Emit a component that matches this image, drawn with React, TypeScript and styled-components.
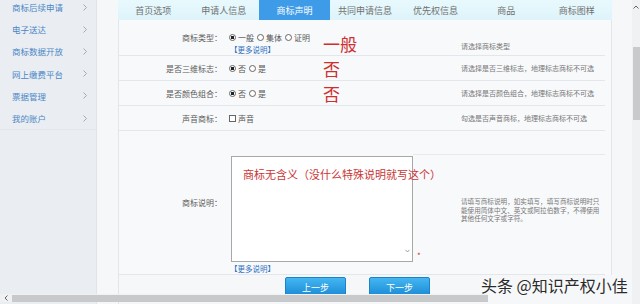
import React from "react";
import styled, { createGlobalStyle } from "styled-components";

const Global = createGlobalStyle`
  html, body { margin: 0; padding: 0; }
  body {
    width: 640px; height: 304px; overflow: hidden; background: #f5f7f9;
    font-family: "Noto Sans CJK SC", "Noto Sans", sans-serif;
  }
`;

const Page = styled.div`
  position: relative;
  width: 640px;
  height: 304px;
  display: flex;
  overflow: hidden;
  background: #f5f7f9;
`;

const Sidebar = styled.nav`
  width: 97px;
  flex: none;
  background: #eaeef3;
  border-right: 1px solid #dfe4ea;
  box-sizing: border-box;
`;

const MenuList = styled.ul`
  list-style: none;
  margin: -4px 0 0;
  padding: 0;
  border-bottom: 1px solid #e1e6ec;
`;

const MenuItem = styled.li`
  height: 22.2px;
  display: flex;
  align-items: center;
  justify-content: space-between;
  padding: 0 9px 0 12px;
  font-size: 8.5px;
  color: #4a86c6;
`;

const Chevron = () => (
  <svg width="4" height="7" viewBox="0 0 4 7">
    <path d="M0.5 0.5 L3.5 3.5 L0.5 6.5" fill="none" stroke="#9aa3ad" strokeWidth="0.9" />
  </svg>
);

const Main = styled.div`
  margin-left: 21px;
  width: 494px;
  flex: none;
  display: flex;
  flex-direction: column;
`;

const Tabs = styled.div`
  height: 20px;
  display: grid;
  grid-template-columns: repeat(7, 1fr);
  background: linear-gradient(#e8f9fd, #def4fa);
`;

const Tab = styled.div<{ $active?: boolean }>`
  display: flex;
  align-items: center;
  justify-content: center;
  font-size: 9px;
  color: ${(p) => (p.$active ? "#ffffff" : "#707070")};
  background: ${(p) => (p.$active ? "#3d9be8" : "transparent")};
`;

const Panel = styled.div`
  flex: 1;
  background: #f8f9fb;
  border-left: 1px solid #e2e6eb;
  border-right: 1px solid #e2e6eb;
  padding-right: 6px;
  box-sizing: border-box;
`;

const Row = styled.div<{ $h: number }>`
  height: ${(p) => p.$h}px;
  display: grid;
  grid-template-columns: 109px 233px 1fr;
  border-bottom: 1px solid #e3e6ea;
  box-sizing: border-box;
`;

const Label = styled.div`
  display: flex;
  align-items: center;
  justify-content: flex-end;
  padding-right: 6px;
  font-size: 8px;
  color: #5a5a5a;
  white-space: nowrap;
`;

const Control = styled.div<{ $top?: number }>`
  display: grid;
  grid-template-columns: 95px auto;
  align-items: center;
  align-content: ${(p) => (p.$top !== undefined ? "start" : "center")};
  padding-top: ${(p) => p.$top ?? 0}px;
`;

const Stack = styled.div`
  display: flex;
  flex-direction: column;
`;

const Line = styled.div`
  height: 12px;
  display: flex;
  align-items: center;
  font-size: 8px;
  color: #555;
  white-space: nowrap;
`;

const More = styled.span`
  font-size: 7.5px;
  color: #2e6fc0;
  margin-left: 2px;
`;

const Radio = styled.span<{ $on?: boolean }>`
  width: 5px;
  height: 5px;
  border: 0.8px solid #666;
  border-radius: 50%;
  margin: 0 2px 0 1px;
  background: ${(p) => (p.$on ? "radial-gradient(circle, #222 45%, #fff 55%)" : "#fff")};
  flex: none;
`;

const Box = styled.span`
  width: 5px;
  height: 5px;
  border: 0.8px solid #666;
  margin: 0 2px 0 1px;
  background: #fff;
  flex: none;
`;

const Opt = styled.span`
  margin-right: 2px;
`;

const Note = styled.span`
  font-size: 17px;
  line-height: 17px;
  color: #cf2f2f;
  white-space: nowrap;
`;

const Hint = styled.div<{ $align?: string; $pad?: number }>`
  position: relative;
  display: flex;
  flex-direction: column;
  justify-content: ${(p) => p.$align ?? "center"};
  padding-top: ${(p) => p.$pad ?? 0}px;
  padding-bottom: ${(p) => (p.$align === "flex-end" ? 4 : 0)}px;
  font-size: 7px;
  color: #777;
  white-space: nowrap;
  box-sizing: border-box;
`;

const HintLineText = styled.div`
  font-size: 6.6px;
  height: 8.6px;
  line-height: 8.6px;
  white-space: nowrap;
`;

const HintRule = styled.div`
  position: absolute;
  left: -48px;
  right: 0;
  top: 23px;
  border-top: 1px solid #e6e9ed;
`;

const AreaWrap = styled.div`
  position: relative;
  margin-left: 3px;
  width: 182px;
`;

const Area = styled.div`
  width: 182px;
  height: 106px;
  box-sizing: border-box;
  border: 1px solid #a8a8a8;
  background: #fff;
`;

const AreaText = styled.div`
  position: absolute;
  left: 12px;
  top: 11px;
  font-size: 11px;
  line-height: 14px;
  color: #c93535;
  white-space: nowrap;
`;

const AreaArrow = styled.div`
  position: absolute;
  right: 3px;
  bottom: 9px;
  display: flex;
`;

const Star = styled.span`
  position: absolute;
  left: 186px;
  top: 94px;
  font-size: 8px;
  color: #d03030;
`;

const Buttons = styled.div`
  height: 29px;
  display: flex;
  gap: 23px;
  padding: 2px 0 0 166px;
  box-sizing: border-box;
  border-left: 1px solid #e2e6eb;
`;

const Btn = styled.div`
  width: 61px;
  height: 20px;
  box-sizing: border-box;
  border: 1px solid #1b82cc;
  border-radius: 2px;
  background: linear-gradient(#44b6f0, #1a8ad6);
  color: #fff;
  font-size: 9px;
  display: flex;
  align-items: center;
  justify-content: center;
`;

const Gutter = styled.div`
  flex: 1;
`;

const VScroll = styled.div`
  width: 8px;
  flex: none;
  background: #f0f1f2;
  display: flex;
  flex-direction: column;
  align-items: center;
`;

const VArrow = styled.div`
  height: 14px;
  display: flex;
  align-items: center;
`;

const VThumb = styled.div`
  margin-top: 33px;
  width: 7px;
  height: 73px;
  background: #c9cacb;
`;

const HScroll = styled.div`
  position: absolute;
  left: 0;
  bottom: 2px;
  width: 488px;
  height: 8px;
  display: flex;
  align-items: center;
  background: #f0f1f2;
`;

const HArrow = styled.div`
  width: 12px;
  display: flex;
  justify-content: center;
`;

const HThumb = styled.div`
  flex: 1;
  height: 7px;
  background: #c8c9ca;
`;

const Watermark = styled.div`
  position: absolute;
  left: 481px;
  top: 275px;
  font-size: 16px;
  line-height: 20px;
  color: #2a2a2a;
  white-space: nowrap;
  text-shadow: 0 0 2px #fff;
`;

const menu = ["商标后续申请", "电子送达", "商标数据开放", "网上缴费平台", "票据管理", "我的账户"];
const tabs = ["首页选项", "申请人信息", "商标声明", "共同申请信息", "优先权信息", "商品", "商标图样"];
const descHint = [
  "请填写商标说明，如实填写，填写商标说明时只",
  "能使用简体中文、英文或阿拉伯数字，不得使用",
  "其他任何文字或字符。",
];

export default function App() {
  return (
    <>
      <Global />
      <Page>
        <Sidebar>
          <MenuList>
            {menu.map((m) => (
              <MenuItem key={m}>
                <span>{m}</span>
                <Chevron />
              </MenuItem>
            ))}
          </MenuList>
        </Sidebar>
        <Main>
          <Tabs>
            {tabs.map((t, i) => (
              <Tab key={t} $active={i === 2}>
                {t}
              </Tab>
            ))}
          </Tabs>
          <Panel>
            <Row $h={36}>
              <Label>商标类型：</Label>
              <Control $top={11}>
                <Stack>
                  <Line>
                    <Radio $on />
                    <Opt>一般</Opt>
                    <Radio />
                    <Opt>集体</Opt>
                    <Radio />
                    <Opt>证明</Opt>
                  </Line>
                  <Line>
                    <More>【更多说明】</More>
                  </Line>
                </Stack>
                <Note>一般</Note>
              </Control>
              <Hint $align="flex-end">请选择商标类型</Hint>
            </Row>
            <Row $h={25}>
              <Label>是否三维标志：</Label>
              <Control>
                <Line>
                  <Radio $on />
                  <Opt>否</Opt>
                  <Radio />
                  <Opt>是</Opt>
                </Line>
                <Note>否</Note>
              </Control>
              <Hint>请选择是否三维标志，地理标志商标不可选</Hint>
            </Row>
            <Row $h={25}>
              <Label>是否颜色组合：</Label>
              <Control>
                <Line>
                  <Radio $on />
                  <Opt>否</Opt>
                  <Radio />
                  <Opt>是</Opt>
                </Line>
                <Note>否</Note>
              </Control>
              <Hint>请选择是否颜色组合，地理标志商标不可选</Hint>
            </Row>
            <Row $h={25}>
              <Label>声音商标：</Label>
              <Control>
                <Line>
                  <Box />
                  <Opt>声音</Opt>
                </Line>
              </Control>
              <Hint>勾选是否声音商标，地理标志商标不可选</Hint>
            </Row>
            <Row $h={144}>
              <Label>商标说明：</Label>
              <Control $top={25}>
                <Stack>
                  <AreaWrap>
                    <Area />
                    <AreaText>商标无含义（没什么特殊说明就写这个）</AreaText>
                    <AreaArrow>
                      <svg width="5" height="4" viewBox="0 0 5 4">
                        <path d="M0.5 0.8 L2.5 3 L4.5 0.8" fill="none" stroke="#8a8a8a" strokeWidth="0.8" />
                      </svg>
                    </AreaArrow>
                    <Star>*</Star>
                  </AreaWrap>
                  <Line>
                    <More>【更多说明】</More>
                  </Line>
                </Stack>
              </Control>
              <Hint $align="flex-start" $pad={66}>
                <HintRule />
                {descHint.map((l) => (
                  <HintLineText key={l}>{l}</HintLineText>
                ))}
              </Hint>
            </Row>
          </Panel>
          <Buttons>
            <Btn>上一步</Btn>
            <Btn>下一步</Btn>
          </Buttons>
        </Main>
        <Gutter />
        <VScroll>
          <VArrow>
            <svg width="6" height="4" viewBox="0 0 6 4">
              <path d="M0.5 3.5 L3 1 L5.5 3.5" fill="none" stroke="#555" strokeWidth="0.9" />
            </svg>
          </VArrow>
          <VThumb />
        </VScroll>
        <HScroll>
          <HArrow>
            <svg width="4" height="6" viewBox="0 0 4 6">
              <path d="M3.5 0.5 L1 3 L3.5 5.5" fill="none" stroke="#555" strokeWidth="0.9" />
            </svg>
          </HArrow>
          <HThumb />
        </HScroll>
        <Watermark>头条 @知识产权小佳</Watermark>
      </Page>
    </>
  );
}
